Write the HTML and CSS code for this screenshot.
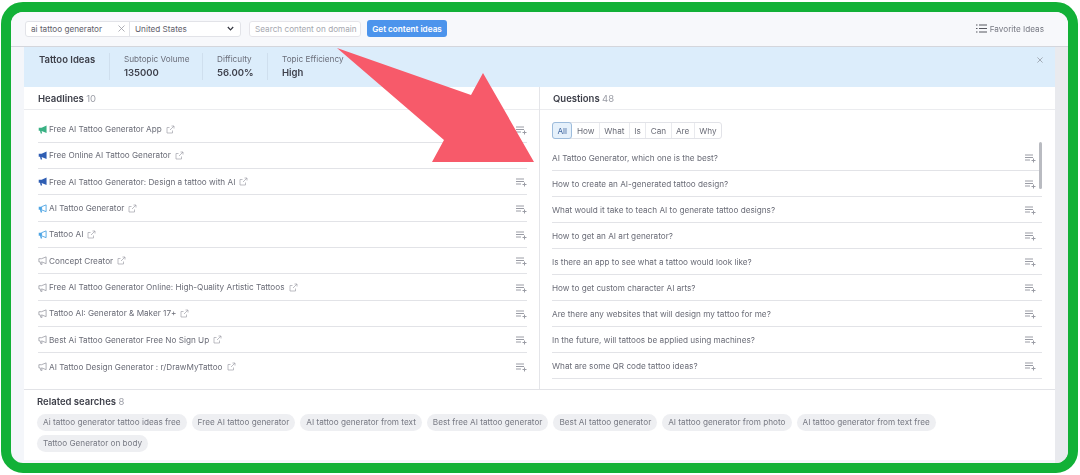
FILE: index.html
```html
<!DOCTYPE html>
<html lang="en">

<head>
    <meta charset="UTF-8">
    <title>Tattoo Ideas</title>
    <link rel="stylesheet" href="styles.css">
</head>

<body>
    <svg class="defs" width="0" height="0">
        <symbol id="horn" viewBox="0 0 10 10">
            <path d="M9.5 .5 V9 L4 6.7 L4.6 9.5 H3 L2.2 6.5 H.8 V3 H4 Z" />
        </symbol>
        <symbol id="horn-half" viewBox="0 0 10 10">
            <path d="M9 1 V8.5 L4 6.5 V3 Z" fill="none" stroke="currentColor" stroke-width="1" />
            <path d="M.8 3 H4 V6.7 L4.6 9.5 H3 L2.2 6.5 H.8 Z" />
        </symbol>
        <symbol id="horn-line" viewBox="0 0 10 10">
            <path d="M9 1 V8.5 L4 6.5 L4.5 9.3 H3.1 L2.4 6.5 H1 V3 H4 Z" fill="none" stroke="currentColor" stroke-width=".8" />
        </symbol>
        <symbol id="ext" viewBox="0 0 9 9">
            <path d="M6.5 5.5 V8 H1 V2.5 H3.5 M4 5 L8 1 M5.5 1 H8 V3.5" fill="none" stroke="currentColor" stroke-width=".7" />
        </symbol>
        <symbol id="add" viewBox="0 0 11 9">
            <path d="M0 1 H8 M0 3.5 H8 M0 6 H5 M8.5 4.5 V8.5 M6.5 6.5 H10.5" fill="none" stroke="currentColor" stroke-width="1" />
        </symbol>
    </svg>

    <div class="frame">
        <header class="topbar">
            <div class="query">
                <div class="query__text">
                    <span>ai tattoo generator</span>
                    <svg class="query__clear" viewBox="0 0 7 7"><path d="M.5 .5 L6.5 6.5 M6.5 .5 L.5 6.5" /></svg>
                </div>
                <div class="query__country">
                    <span>United States</span>
                    <svg class="query__caret" viewBox="0 0 7 5"><path d="M.8 1 L3.5 3.8 L6.2 1" /></svg>
                </div>
            </div>
            <div class="domain">Search content on domain</div>
            <button class="btn-ideas">Get content ideas</button>
            <div class="favorites">
                <svg class="favorites__icon" viewBox="0 0 11 9"><path d="M0 1 H1.5 M3 1 H11 M0 4.5 H1.5 M3 4.5 H11 M0 8 H1.5 M3 8 H11" /></svg>
                <span>Favorite Ideas</span>
            </div>
        </header>

        <main class="main">
            <section class="panel">
                <div class="info">
                    <div class="info__title">Tattoo Ideas</div>
                    <div class="info__stat info__stat--volume">
                        <span>Subtopic Volume</span>
                        <b>135000</b>
                    </div>
                    <div class="info__stat info__stat--difficulty">
                        <span>Difficulty</span>
                        <b>56.00%</b>
                    </div>
                    <div class="info__stat info__stat--efficiency">
                        <span>Topic Efficiency</span>
                        <b>High</b>
                    </div>
                    <svg class="info__close" viewBox="0 0 7 7"><path d="M.5 .5 L6.5 6.5 M6.5 .5 L.5 6.5" /></svg>
                </div>

                <div class="columns">
                    <div class="col col--left">
                        <h2 class="col__head">Headlines <span>10</span></h2>
                        <ul class="list list--headlines">
                            <li class="row">
                                <svg class="horn horn--green"><use href="#horn" /></svg>
                                <span>Free AI Tattoo Generator App</span>
                                <svg class="ext"><use href="#ext" /></svg>
                                <svg class="add"><use href="#add" /></svg>
                            </li>
                            <li class="row">
                                <svg class="horn horn--navy"><use href="#horn" /></svg>
                                <span>Free Online AI Tattoo Generator</span>
                                <svg class="ext"><use href="#ext" /></svg>
                                <svg class="add"><use href="#add" /></svg>
                            </li>
                            <li class="row">
                                <svg class="horn horn--navy"><use href="#horn" /></svg>
                                <span>Free AI Tattoo Generator: Design a tattoo with AI</span>
                                <svg class="ext"><use href="#ext" /></svg>
                                <svg class="add"><use href="#add" /></svg>
                            </li>
                            <li class="row">
                                <svg class="horn horn--sky"><use href="#horn-half" /></svg>
                                <span>AI Tattoo Generator</span>
                                <svg class="ext"><use href="#ext" /></svg>
                                <svg class="add"><use href="#add" /></svg>
                            </li>
                            <li class="row">
                                <svg class="horn horn--sky"><use href="#horn-half" /></svg>
                                <span>Tattoo AI</span>
                                <svg class="ext"><use href="#ext" /></svg>
                                <svg class="add"><use href="#add" /></svg>
                            </li>
                            <li class="row">
                                <svg class="horn horn--gray"><use href="#horn-line" /></svg>
                                <span>Concept Creator</span>
                                <svg class="ext"><use href="#ext" /></svg>
                                <svg class="add"><use href="#add" /></svg>
                            </li>
                            <li class="row">
                                <svg class="horn horn--gray"><use href="#horn-line" /></svg>
                                <span>Free AI Tattoo Generator Online: High-Quality Artistic Tattoos</span>
                                <svg class="ext"><use href="#ext" /></svg>
                                <svg class="add"><use href="#add" /></svg>
                            </li>
                            <li class="row">
                                <svg class="horn horn--gray"><use href="#horn-line" /></svg>
                                <span>Tattoo AI: Generator &amp; Maker 17+</span>
                                <svg class="ext"><use href="#ext" /></svg>
                                <svg class="add"><use href="#add" /></svg>
                            </li>
                            <li class="row">
                                <svg class="horn horn--gray"><use href="#horn-line" /></svg>
                                <span>Best Ai Tattoo Generator Free No Sign Up</span>
                                <svg class="ext"><use href="#ext" /></svg>
                                <svg class="add"><use href="#add" /></svg>
                            </li>
                            <li class="row">
                                <svg class="horn horn--gray"><use href="#horn-line" /></svg>
                                <span>AI Tattoo Design Generator : r/DrawMyTattoo</span>
                                <svg class="ext"><use href="#ext" /></svg>
                                <svg class="add"><use href="#add" /></svg>
                            </li>
                        </ul>
                    </div>

                    <div class="col col--right">
                        <h2 class="col__head">Questions <span>48</span></h2>
                        <div class="tabs">
                            <span class="tab tab--active">All</span>
                            <span class="tab">How</span>
                            <span class="tab">What</span>
                            <span class="tab">Is</span>
                            <span class="tab">Can</span>
                            <span class="tab">Are</span>
                            <span class="tab">Why</span>
                        </div>
                        <ul class="list list--questions">
                            <li class="row"><span>AI Tattoo Generator, which one is the best?</span><svg class="add"><use href="#add" /></svg></li>
                            <li class="row"><span>How to create an AI-generated tattoo design?</span><svg class="add"><use href="#add" /></svg></li>
                            <li class="row"><span>What would it take to teach AI to generate tattoo designs?</span><svg class="add"><use href="#add" /></svg></li>
                            <li class="row"><span>How to get an AI art generator?</span><svg class="add"><use href="#add" /></svg></li>
                            <li class="row"><span>Is there an app to see what a tattoo would look like?</span><svg class="add"><use href="#add" /></svg></li>
                            <li class="row"><span>How to get custom character AI arts?</span><svg class="add"><use href="#add" /></svg></li>
                            <li class="row"><span>Are there any websites that will design my tattoo for me?</span><svg class="add"><use href="#add" /></svg></li>
                            <li class="row"><span>In the future, will tattoos be applied using machines?</span><svg class="add"><use href="#add" /></svg></li>
                            <li class="row"><span>What are some QR code tattoo ideas?</span><svg class="add"><use href="#add" /></svg></li>
                        </ul>
                        <div class="scrollbar"></div>
                    </div>
                </div>

                <div class="related">
                    <h2 class="related__head">Related searches <span>8</span></h2>
                    <div class="chips">
                        <span class="chip">Ai tattoo generator tattoo ideas free</span>
                        <span class="chip">Free AI tattoo generator</span>
                        <span class="chip">AI tattoo generator from text</span>
                        <span class="chip">Best free AI tattoo generator</span>
                        <span class="chip">Best AI tattoo generator</span>
                        <span class="chip">AI tattoo generator from photo</span>
                        <span class="chip">AI tattoo generator from text free</span>
                        <span class="chip">Tattoo Generator on body</span>
                    </div>
                </div>
            </section>
        </main>
    </div>

    <!-- annotation drawn over the screenshot -->
    <svg class="arrow" viewBox="0 0 1080 475">
        <polygon points="337,48 471,95 483,73 534,162 432,162 444,140" />
    </svg>
</body>

</html>
```

FILE: styles.css
```css
* {
    box-sizing: border-box;
}

body {
    margin: 0;
    width: 1080px;
    height: 475px;
    overflow: hidden;
    background: #fff;
    font-family: Inter, "Liberation Sans", sans-serif;
    font-size: 8.2px;
    color: #6a6c77;
}

.defs {
    display: block;
    height: 0;
}

ul {
    list-style: none;
    margin: 0;
    padding: 0;
}

h2 {
    margin: 0;
    font-size: 9.5px;
    font-weight: 600;
    color: #3d3f49;
}

h2 span {
    font-weight: 400;
    color: #9a9ca5;
}

/* the source screenshot is a soft, upscaled capture */
.frame {
    display: flex;
    flex-direction: column;
    width: 1077px;
    height: 471px;
    margin: 2px 0 0 1px;
    border: 10px solid #12b137;
    border-radius: 22px;
    background: #f4f6fa;
    overflow: hidden;
    filter: blur(.3px);
}

/* top bar */

.topbar {
    display: flex;
    align-items: center;
    flex: 0 0 35px;
    padding: 0 24px 1px 14px;
    background: #f7f8fb;
    border-bottom: 1px solid #d4d6dc;
}

.query {
    display: flex;
    width: 216px;
    height: 16px;
    background: #fff;
    border: 1px solid #e2e3e8;
    border-radius: 3px;
    color: #5f616c;
}

.query__text {
    display: flex;
    align-items: center;
    justify-content: space-between;
    width: 104px;
    padding: 0 4px 0 5px;
    border-right: 1px solid #e2e3e8;
}

.query__clear {
    width: 7px;
    height: 7px;
    fill: none;
    stroke: #9a9ca5;
    stroke-width: .8;
}

.query__country {
    display: flex;
    align-items: center;
    justify-content: space-between;
    flex: 1;
    padding: 0 6px 0 5px;
}

.query__caret {
    width: 7px;
    height: 5px;
    fill: none;
    stroke: #33353f;
    stroke-width: 1.2;
}

.domain {
    display: flex;
    align-items: center;
    width: 112px;
    height: 16px;
    margin-left: 8px;
    padding: 0 5px;
    background: #fff;
    border: 1px solid #e6e5ea;
    border-radius: 3px;
    color: #a6a8b0;
    white-space: nowrap;
}

.btn-ideas {
    width: 80px;
    height: 17px;
    margin-left: 6px;
    padding: 0;
    border: 0;
    border-radius: 3px;
    background: #4c94ec;
    color: #fff;
    font: 600 8.2px Inter, "Liberation Sans", sans-serif;
}

.favorites {
    display: flex;
    align-items: center;
    gap: 3px;
    margin-left: auto;
    color: #777983;
}

.favorites__icon {
    width: 11px;
    height: 9px;
    fill: none;
    stroke: #55575f;
    stroke-width: 1;
}

/* main panel */

.main {
    flex: 1;
    display: flex;
    padding: 0 0 3px 13px;
    border-right: 13px solid #e9eaee;
}

.panel {
    display: flex;
    flex-direction: column;
    flex: 1;
    background: #fff;
}

.info {
    display: flex;
    align-items: flex-start;
    flex: 0 0 40px;
    padding: 6px 0 0 15px;
    background: #dcedfb;
}

.info__title {
    width: 70px;
    font-size: 9.5px;
    font-weight: 600;
    line-height: 13px;
    color: #3d3f49;
}

.info__stat {
    display: flex;
    flex-direction: column;
    height: 27px;
    padding-left: 14px;
    border-left: 1px solid #cfdfee;
    line-height: 13px;
    color: #6a6d79;
}

.info__stat b {
    font-size: 9.5px;
    font-weight: 600;
    color: #3f414c;
}

.info__stat--volume {
    width: 93px;
}

.info__stat--difficulty {
    width: 65px;
}

.info__close {
    width: 6px;
    height: 6px;
    margin: 4px 12px 0 auto;
    fill: none;
    stroke: #9fa8b3;
    stroke-width: 1.1;
}

.columns {
    display: flex;
    flex: 0 0 302px;
}

.col {
    position: relative;
    flex: 0 0 515px;
}

.col--right {
    flex: 1;
    border-left: 1px solid #e4e5e9;
}

.col__head {
    height: 23px;
    padding-left: 14px;
    line-height: 24px;
    border-bottom: 1px solid #ebecef;
}

.col--right .col__head {
    padding-left: 13px;
}

.list--headlines {
    padding: 6.4px 12px 0 14px;
}

.list--questions {
    padding: 6px 13px 0 12px;
}

.row {
    display: flex;
    align-items: center;
    height: 26.35px;
    border-bottom: 1px solid #e2e3e7;
    white-space: nowrap;
}

.list--headlines .row:last-child {
    border-bottom: 0;
}

.list--questions .row {
    height: 26px;
}

.horn {
    flex: none;
    width: 9px;
    height: 9px;
    margin-right: 2px;
    fill: currentColor;
}

.horn--green {
    color: #39b184;
}

.horn--navy {
    color: #2f5eb3;
}

.horn--sky {
    color: #4ea5e4;
}

.horn--gray {
    color: #8f919b;
}

.ext {
    flex: none;
    width: 9px;
    height: 9px;
    margin-left: 4px;
    color: #a0a2ab;
}

.add {
    flex: none;
    width: 11px;
    height: 9px;
    margin: 2px 0 0 auto;
    color: #9a9ca5;
}

.list--questions .add {
    margin-right: 6px;
}

/* question filter */

.tabs {
    display: flex;
    width: 170px;
    height: 17px;
    margin: 12px 0 0 12px;
    background: #fff;
    border: 1px solid #e2e3e8;
    border-radius: 3px;
}

.tab {
    display: flex;
    align-items: center;
    justify-content: center;
    flex: auto;
    padding: 0 4px;
    border-right: 1px solid #e9eaee;
}

.tab:last-child {
    border-right: 0;
}

.tab--active {
    margin: -1px 0 -1px -1px;
    background: #e6f1fb;
    border: 1px solid #9dbcdc;
    border-radius: 3px;
    color: #3f66a0;
}

.scrollbar {
    position: absolute;
    top: 55px;
    right: 13px;
    width: 3px;
    height: 47px;
    border-radius: 2px;
    background: #b9bbc1;
}

/* related searches */

.related {
    flex: 1;
    padding: 6px 14px 0 13px;
    border-top: 1px solid #e2e3e7;
}

.related__head {
    line-height: 12px;
    margin-bottom: 6px;
}

.chips {
    display: flex;
    flex-wrap: wrap;
    gap: 4px 5px;
}

.chip {
    height: 17px;
    padding: 0 6px;
    line-height: 17px;
    background: #eeeff2;
    border-radius: 9px;
    color: #777983;
    white-space: nowrap;
}

/* red arrow */

.arrow {
    position: absolute;
    left: 0;
    top: 0;
    width: 1080px;
    height: 475px;
    fill: #f75a6a;
}
```
